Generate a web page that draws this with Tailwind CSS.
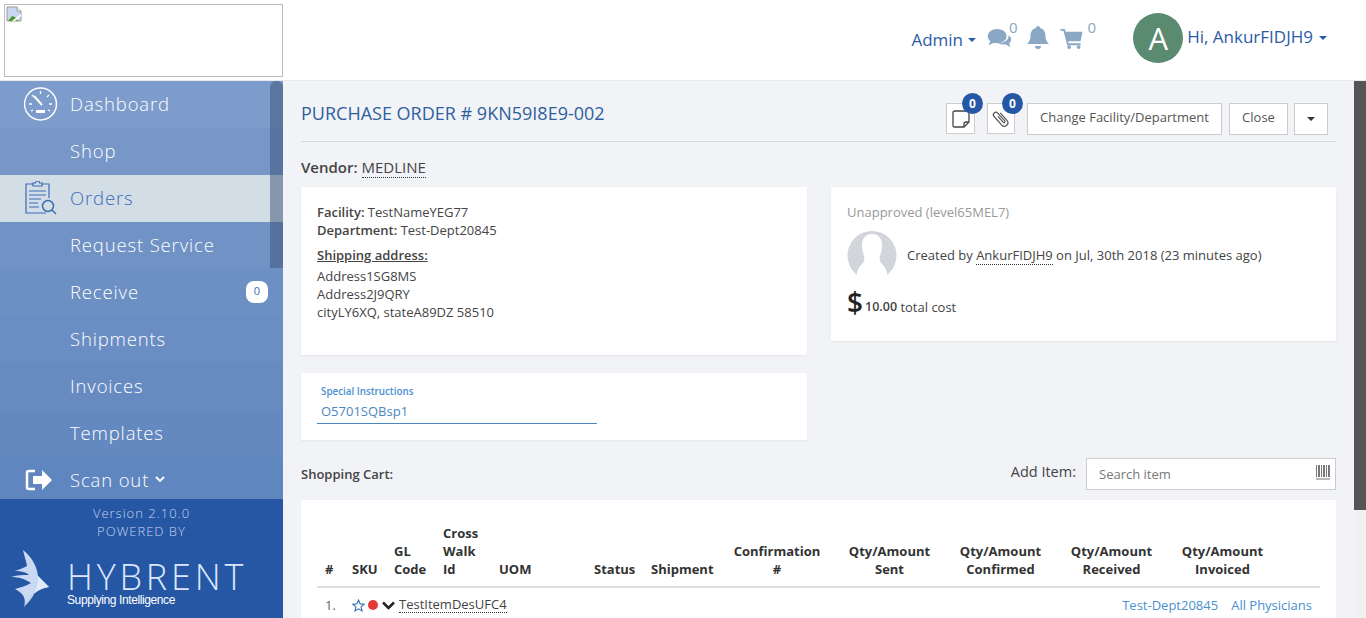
<!DOCTYPE html>
<html lang="en">
<head>
    <meta charset="UTF-8">
    <title>Purchase Order</title>
    <script src="https://cdn.jsdelivr.net/npm/@tailwindcss/browser@4"></script>
</head>
<body class="h-[618px] overflow-hidden bg-[#f1f3f7] font-['Open_Sans',sans-serif] text-[13px] text-[#444]">
    <!-- Header -->
    <header class="flex h-[81px] border-b border-[#e8eaee] bg-white">
        <div class="ml-1 mt-1 h-[73px] w-[279px] border border-[#bbb] pl-[1px] pt-[1px]">
            <svg width="16" height="16" viewBox="0 0 16 16">
                <path d="M1 1h10l4 4v10H1z" fill="#c9d7f2" stroke="#9a9a9a"/>
                <path d="M11 1v4h4" fill="#fff" stroke="#9a9a9a"/>
                <path d="M2 15l4-5 3 1 3 4z" fill="#4c9a2a"/>
                <path d="M15 8L6 15h3l6-5z" fill="#fff"/>
            </svg>
        </div>
        <div class="ml-auto flex items-start text-[#2c5ba6]">
            <span class="mt-[27px] text-[17px]">Admin</span>
            <span class="ml-[5px] mt-[38px] h-0 w-0 border-x-4 border-t-4 border-x-transparent border-t-[#2c5ba6]"></span>
            <svg class="ml-[11px] mt-[28px]" width="26" height="21" viewBox="0 0 26 22" fill="#8aa8c4">
                <ellipse cx="10" cy="8.500" rx="10" ry="7.500"/>
                <path d="M3 13l-2 5 7-3z"/>
                <path d="M22 7.500c3 2 4 6 .5 8.500l1.500 4-5.500-3c-3 .5-6 0-8-1.500 6 .5 12-2.500 11.500-8z"/>
            </svg>
            <span class="-ml-[4px] mt-[16px] text-[15px] text-[#8aa8c4]">0</span>
            <svg class="ml-[8px] mt-[25px]" width="24" height="25" viewBox="0 0 24 25" fill="#8aa8c4">
                <path d="M12 1a2 2 0 0 1 2 2c4 1 5.500 4 5.500 8 0 4 1.500 6 3.500 8H1c2-2 3.500-4 3.500-8 0-4 1.500-7 5.500-8a2 2 0 0 1 2-2z"/>
                <path d="M9 21h6a3 3 0 0 1-6 0z"/>
            </svg>
            <svg class="ml-[10px] mt-[28px]" width="24" height="21" viewBox="0 0 24 22" fill="#8aa8c4">
                <path d="M0 1h4.500l.8 3H23l-2 10H8l.5 2H21v2H7L3 3H0z"/>
                <circle cx="9" cy="20" r="2"/>
                <circle cx="19" cy="20" r="2"/>
            </svg>
            <span class="ml-[4px] mt-[16px] text-[15px] text-[#8aa8c4]">0</span>
            <div class="ml-[37px] mt-[13px] flex h-[50px] w-[50px] items-center justify-center rounded-full bg-[#5a8a70] text-[31px] text-white">A</div>
            <span class="ml-[4px] mt-[24px] text-[17px]">Hi, AnkurFIDJH9</span>
            <span class="ml-[6px] mr-[39px] mt-[36px] h-0 w-0 border-x-4 border-t-4 border-x-transparent border-t-[#2c5ba6]"></span>
        </div>
    </header>

    <div class="flex h-[537px]">
        <!-- Sidebar -->
        <aside class="relative flex w-[283px] shrink-0 flex-col bg-[#2557a5]">
            <nav class="h-[418px] shrink-0 overflow-hidden text-[18.500px] font-light tracking-[0.85px] text-white">
                <a class="flex h-[47px] items-center bg-[#7d9ccb] pb-[2px]">
                    <svg class="ml-[24px] w-[46px] shrink-0" height="34" viewBox="0 0 46 34" fill="none" stroke="#fff">
                        <circle cx="16.500" cy="17" r="16" stroke-width="1.500"/>
                        <path d="M16.500 4v3M5 17h3M25 17h3M8 8l2 2M25 8l-2 2M7 24l2-1M26 24l-2-1" stroke-width="1.300"/>
                        <path d="M10 9l8 9" stroke-width="2"/>
                        <path d="M12 26h9v-3h-9z" fill="#fff" stroke="none"/>
                    </svg>
                    <span>Dashboard</span>
                </a>
                <a class="flex h-[47px] items-center bg-[#7797c8] pb-[2px] pl-[70px]">Shop</a>
                <a class="flex h-[47px] items-center bg-[#d3dde5] pb-[2px] text-[#3a6db5]">
                    <svg class="ml-[25px] w-[45px] shrink-0" height="34" viewBox="0 0 45 34" fill="none" stroke="#3a6db5" stroke-width="1.200">
                        <path d="M8 3H1v29h20"/>
                        <path d="M17 3h7v14"/>
                        <path d="M8 5V2h2.500a2 2 0 0 1 4 0H17v3z"/>
                        <path d="M4 10h17M4 14h17M4 18h12M4 22h9M4 26h10"/>
                        <circle cx="23" cy="25" r="5.500" stroke-width="1.500"/>
                        <path d="M27 29l4 4" stroke-width="1.500"/>
                    </svg>
                    <span>Orders</span>
                </a>
                <a class="flex h-[47px] items-center bg-[#7092c5] pb-[2px] pl-[70px]">Request Service</a>
                <a class="flex h-[47px] items-center bg-[#6d90c4] pb-[2px] pl-[70px]">
                    <span>Receive</span>
                    <span class="ml-auto mr-[15px] flex h-[22px] w-[22px] items-center justify-center rounded-[8px] bg-white text-[11px] font-normal tracking-normal text-[#3a6db5]">0</span>
                </a>
                <a class="flex h-[47px] items-center bg-[#6a8dc3] pb-[2px] pl-[70px]">Shipments</a>
                <a class="flex h-[47px] items-center bg-[#678bc1] pb-[2px] pl-[70px]">Invoices</a>
                <a class="flex h-[47px] items-center bg-[#6488c0] pb-[2px] pl-[70px]">Templates</a>
                <a class="flex h-[47px] items-center bg-[#6086bf] pb-[2px]">
                    <svg class="ml-[25px] w-[45px] shrink-0" height="24" viewBox="0 0 45 24" fill="#fff">
                        <path d="M10 3H4a2 2 0 0 0-2 2v14a2 2 0 0 0 2 2h6" fill="none" stroke="#fff" stroke-width="2.500"/>
                        <path d="M8 8h9V2l10 10-10 10v-6H8z"/>
                    </svg>
                    <span>Scan out</span>
                    <svg class="ml-[6px]" width="10" height="7" viewBox="0 0 10 7" fill="none" stroke="#fff" stroke-width="1.800"><path d="M1 1l4 4 4-4"/></svg>
                </a>
            </nav>
            <!-- Footer -->
            <div class="flex-1 text-center text-[13px] font-light leading-[18px] tracking-[1px] text-[#c5d3e8]">
                <p class="mt-[5px]">Version 2.10.0</p>
                <p>POWERED BY</p>
                <div class="mt-[10px] flex pl-[11px] text-left">
                    <svg class="shrink-0" width="40" height="57" viewBox="0 0 40 57">
                        <path d="M12 0C20 6 26 16 27 26L38 37C28 38 18 46 13 57C15 50 14 44 4 39C10 37 15 36 20 33C14 29 8 27 0 27C6 25 12 25 18 25C15 22 10 21 4 21C9 19 13 18 16 16C15 10 13 5 12 0z" fill="#c9d9f4"/>
                        <path d="M27 26L38 37C28 38 18 46 13 57C22 48 28 38 27 26z" fill="#e0eafa"/>
                    </svg>
                    <div class="ml-[16px] mt-[9px] text-[#dbe7fa]">
                        <p class="text-[36px] font-light leading-[35px] tracking-[3.800px]">HYBRENT</p>
                        <p class="font-['Liberation_Sans',sans-serif] text-[12px] font-normal leading-[13px] tracking-[-0.400px] text-white">Supplying Intelligence</p>
                    </div>
                </div>
            </div>
            <!-- Scrollbar overlay -->
            <div class="absolute right-0 top-0 h-[187px] w-[13px] rounded-t-[6px] bg-[#3a4f74]/50"></div>
        </aside>

        <!-- Main -->
        <main class="min-w-0 flex-1 pl-[18px] pr-[30px]">
            <div class="flex h-[61px] items-center justify-between border-b border-[#d5d7db]">
                <h1 class="pt-[4px] text-[18px] font-normal text-[#2f5f9e]">PURCHASE ORDER # 9KN59I8E9-002</h1>
                <div class="mt-[15px] flex items-center gap-[6px] pr-[8px] text-[#555]">
                    <button class="relative mr-[6px] flex h-[31px] w-[29px] items-center justify-center border border-[#ccc] bg-white">
                        <svg width="18" height="18" viewBox="0 0 18 18" fill="none" stroke="#444" stroke-width="1.300">
                            <path d="M2.500 1h13A1.500 1.500 0 0 1 17 2.500V12l-5 5H2.500A1.500 1.500 0 0 1 1 15.500v-13A1.500 1.500 0 0 1 2.500 1z"/>
                            <path d="M17 12h-3a2 2 0 0 0-2 2v3"/>
                        </svg>
                        <span class="absolute left-[15px] top-[-11px] flex h-[21px] w-[21px] items-center justify-center rounded-full bg-[#2557a5] text-[12px] font-bold text-white">0</span>
                    </button>
                    <button class="relative mr-[6px] flex h-[31px] w-[28px] items-center justify-center border border-[#ccc] bg-white">
                        <svg width="20" height="20" viewBox="0 0 20 20" fill="none" stroke="#555" stroke-width="1.200">
                            <path transform="rotate(-42 10 10)" d="M13.500 5v10a3.500 3.500 0 0 1-7 0V3.500a2.500 2.500 0 0 1 5 0V14a1 1 0 0 1-2 0V6"/>
                        </svg>
                        <span class="absolute left-[14px] top-[-11px] flex h-[21px] w-[21px] items-center justify-center rounded-full bg-[#2557a5] text-[12px] font-bold text-white">0</span>
                    </button>
                    <button class="mr-[1px] h-[32px] w-[195px] border border-[#ccc] bg-white pb-[2px]">Change Facility/Department</button>
                    <button class="h-[32px] w-[59px] border border-[#ccc] bg-white pb-[2px]">Close</button>
                    <button class="flex h-[32px] w-[34px] items-center justify-center border border-[#ccc] bg-white">
                        <span class="h-0 w-0 border-x-4 border-t-4 border-x-transparent border-t-[#333]"></span>
                    </button>
                </div>
            </div>

            <p class="mt-[15px] text-[15px] leading-[20px]"><b class="font-semibold">Vendor:</b> <span class="border-b border-dotted border-[#333]">MEDLINE</span></p>

            <div class="mt-[10px] grid grid-cols-[506px_505px] gap-x-[24px]">
                <div class="h-[168px] bg-white px-[16px] pt-[16px] leading-[18px] shadow-[0_1px_2px_rgba(0,0,0,0.06)]">
                    <p><b class="font-semibold">Facility:</b> TestNameYEG77</p>
                    <p><b class="font-semibold">Department:</b> Test-Dept20845</p>
                    <p class="mt-[7px] font-semibold underline">Shipping address:</p>
                    <p class="mt-[3px]">Address1SG8MS</p>
                    <p>Address2J9QRY</p>
                    <p>cityLY6XQ, stateA89DZ 58510</p>
                </div>
                <div class="h-[154px] bg-white px-[16px] pt-[16px] leading-[18px] shadow-[0_1px_2px_rgba(0,0,0,0.06)]">
                    <p class="text-[#999]">Unapproved (level65MEL7)</p>
                    <div class="mt-[10px] flex items-center">
                        <svg width="50" height="44" viewBox="0 0 50 44" class="mb-[4px] shrink-0">
                            <circle cx="25" cy="24.500" r="24.500" fill="#d2d5da"/>
                            <path d="M25 3c6 0 10 4 10 11 0 5-1 8-2 11-1 3 0 6 2 8 2 2 4 4 5 9l2 8H8l2-8c1-5 3-7 5-9 2-2 3-5 2-8-1-3-2-6-2-11 0-7 4-11 10-11z" fill="#fff"/>
                        </svg>
                        <p class="ml-[10px]">Created by <span class="border-b border-dotted border-[#333]">AnkurFIDJH9</span> on Jul, 30th 2018 (23 minutes ago)</p>
                    </div>
                    <p class="mt-[7px] flex items-end"><span class="mr-[2px] text-[28px] font-semibold leading-[32px] text-[#222]">$</span><b class="mb-[2px] text-[12.500px] font-semibold">10.00</b><span class="mb-[2px]">&nbsp;total cost</span></p>
                </div>
                <div class="mt-[18px] h-[67px] bg-white px-[16px] pt-[11px] shadow-[0_1px_2px_rgba(0,0,0,0.06)]">
                    <p class="pl-[4px] text-[9.800px] font-semibold leading-[16px] text-[#4a90d0]">Special Instructions</p>
                    <p class="mt-[1px] w-[280px] border-b border-[#4a86c0] pb-[2px] pl-[4px] leading-[20px] text-[#4a86c0]">O5701SQBsp1</p>
                </div>
            </div>

            <div class="mt-[18px] flex h-[32px] items-center justify-between">
                <b class="pt-[2px] font-semibold">Shopping Cart:</b>
                <div class="flex items-center">
                    <span class="mb-[4px] mr-[10px] text-[14.500px]">Add Item:</span>
                    <div class="flex h-[32px] w-[250px] items-center justify-between border border-[#ccc] bg-white pl-[12px] pr-[5px] text-[#777]">
                        <span class="pt-[1px]">Search item</span>
                        <svg class="mb-[4px]" width="14" height="15" viewBox="0 0 14 15" fill="#777">
                            <path d="M0 0h1v12H0zM2 0h2v12H2zM5 0h1v12H5zM7 0h2v12H7zM10 0h1v12h-1zM12 0h2v12h-2zM0 13.500h14v1H0z"/>
                        </svg>
                    </div>
                </div>
            </div>

            <div class="mt-[10px] bg-white px-[16px] pb-[20px] pt-[24px]">
                <table class="w-[1003px] table-fixed text-left">
                    <colgroup>
                        <col class="w-[27px]"><col class="w-[42px]"><col class="w-[49px]"><col class="w-[56px]"><col class="w-[95px]"><col class="w-[57px]"><col class="w-[84px]"><col class="w-[107px]"><col class="w-[111px]"><col class="w-[111px]"><col class="w-[111px]"><col class="w-[111px]"><col>
                    </colgroup>
                    <thead class="align-bottom text-[13px] font-bold leading-[18px] text-[#333]">
                        <tr class="border-b-2 border-[#ddd]">
                            <th class="pb-[8px] pl-[8px] font-bold">#</th>
                            <th class="pb-[8px] pl-[8px] font-bold">SKU</th>
                            <th class="pb-[8px] pl-[8px] font-bold">GL Code</th>
                            <th class="pb-[8px] pl-[8px] font-bold">Cross Walk Id</th>
                            <th class="pb-[8px] pl-[8px] font-bold">UOM</th>
                            <th class="pb-[8px] pl-[8px] font-bold">Status</th>
                            <th class="pb-[8px] pl-[8px] font-bold">Shipment</th>
                            <th class="pb-[8px] pl-[5px] pr-[12px] text-center font-bold">Confirmation #</th>
                            <th class="pb-[8px] text-center font-bold">Qty/Amount Sent</th>
                            <th class="pb-[8px] text-center font-bold">Qty/Amount Confirmed</th>
                            <th class="pb-[8px] text-center font-bold">Qty/Amount Received</th>
                            <th class="pb-[8px] text-center font-bold">Qty/Amount Invoiced</th>
                            <th></th>
                        </tr>
                    </thead>
                    <tbody class="leading-[15px]">
                        <tr>
                            <td class="pl-[8px] pt-[9px] text-[#666]">1.</td>
                            <td colspan="12" class="pl-[8px] pt-[9px]">
                                <div class="flex items-center pr-[8px]">
                                    <svg width="13" height="13" viewBox="0 0 24 24" fill="none" stroke="#2f6fb0" stroke-width="2"><path d="M12 2l3 7 7.500.7-5.700 5 1.700 7.300-6.500-3.900L5.500 22l1.700-7.300-5.700-5L9 9z"/></svg>
                                    <span class="ml-[3px] h-[10px] w-[10px] rounded-full bg-[#e53935]"></span>
                                    <svg class="ml-[4px]" width="13" height="9" viewBox="0 0 13 9" fill="none" stroke="#222" stroke-width="2.500"><path d="M1 1.500l5.500 5.500L12 1.500"/></svg>
                                    <span class="ml-[4px] border-b border-dotted border-[#333]">TestItemDesUFC4</span>
                                    <span class="ml-auto text-[#4a90d0]">Test-Dept20845</span>
                                    <span class="ml-[13px] text-[#4a90d0]">All Physicians</span>
                                </div>
                            </td>
                        </tr>
                    </tbody>
                </table>
            </div>
        </main>
    </div>

    <!-- Page scrollbar -->
    <div class="fixed right-0 top-[81px] flex h-[537px] w-[12px] flex-col bg-[#f1f1f1]">
        <div class="h-[429px] bg-[#555]"></div>
    </div>
</body>
</html>
